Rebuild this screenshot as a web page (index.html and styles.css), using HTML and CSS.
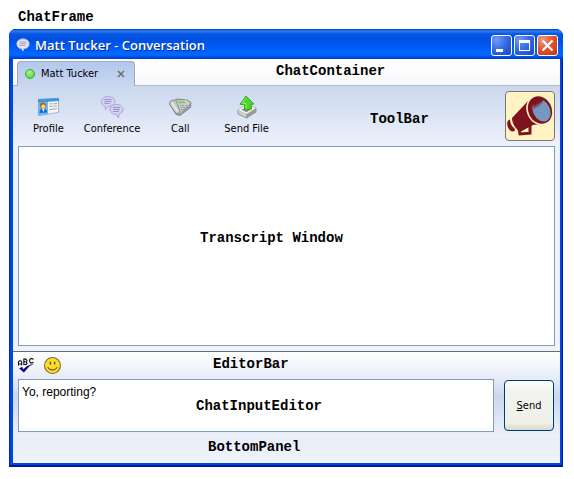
FILE: index.html
```html
<!DOCTYPE html>
<html lang="en">
<head>
<meta charset="utf-8">
<title>Matt Tucker - Conversation</title>
<link rel="stylesheet" href="styles.css">
</head>
<body>
<p class="note caption">ChatFrame</p>
<main class="frame">
  <header class="titlebar">
    <svg class="title-icon" viewBox="0 0 16 16" aria-hidden="true">
      <path d="M8 1C3.500 1 1 3.500 1 6.500S3 12 6 12l2 3 1-3c4 0 6-2.500 6-5.500S12.500 1 8 1z" fill="#e4e4fb" stroke="#c3c0ea"/>
      <path d="M4 4.500h8M4 6.500h8M4 8.500h7" stroke="#9a98c5"/>
    </svg>
    <h1 class="title">Matt Tucker - Conversation</h1>
    <button class="win-btn" type="button" aria-label="Minimize"><svg viewBox="0 0 21 21"><path d="M5 14h7v3H5z" fill="#fff"/></svg></button>
    <button class="win-btn" type="button" aria-label="Maximize"><svg viewBox="0 0 21 21"><path d="M5 5h11v11H5zM6 8v7h9V8z" fill="#fff" fill-rule="evenodd"/></svg></button>
    <button class="win-btn close" type="button" aria-label="Close"><svg viewBox="0 0 21 21"><path d="M5.500 5.500l10 10M15.500 5.500l-10 10" stroke="#fff" stroke-width="2.200"/></svg></button>
  </header>
  <div class="client">
    <nav class="tabs">
      <div class="tab">
        <span class="presence"></span>
        <span>Matt Tucker</span>
        <button class="tab-close" type="button" aria-label="Close tab"><svg viewBox="0 0 8 8"><path d="M1 1l6 6M7 1L1 7" stroke="#69695f" stroke-width="1.400"/></svg></button>
      </div>
      <span class="note note-container">ChatContainer</span>
    </nav>
    <section class="conversation">
      <div class="toolbar">
        <button class="tool" type="button">
          <svg viewBox="0 0 24 24" aria-hidden="true">
            <path d="M2.500 4.500L22.500 3.500v14L2.500 20.500z" fill="#f3f5f7" stroke="#a5b4c3"/>
            <path d="M2 4.500L12 4V19.300L2 21z" fill="#6db8f2"/>
            <path d="M2 4L23 3v3L2 7.500z" fill="#3c98e4"/>
            <path d="M3.500 18c0-3 1-4.500 3.500-4.500s4 1 4 4z" fill="#176dc0"/>
            <path d="M5.800 13.500h2.700L7.500 17z" fill="#fff"/>
            <circle cx="7" cy="10.500" r="3.100" fill="#b56a10"/>
            <circle cx="7.300" cy="11.500" r="2" fill="#ffd18b"/>
            <path d="M13.500 9l3-.2M17.500 8.800l3.500-.3M13.500 11.500l3-.2M17.500 11.200l3.500-.2M13.500 14.500l7.500-.8" stroke="#a0a5ac"/>
          </svg>
          Profile
        </button>
        <button class="tool" type="button">
          <svg viewBox="0 0 24 24" aria-hidden="true">
            <g fill="#d3d0f3" stroke="#aaa6db">
              <path d="M8 1.500c-4 0-6.500 2-6.500 5S3.500 11 5 11.500l.5 3 3-3c4 0 6.500-2 6.500-5s-3-5-7-5z"/>
              <path d="M16.500 9.500c-4 0-6.500 2-6.500 5s2.500 5 6 5l2.500 3.500.5-4c2.500-.7 4-2.300 4-4.500 0-3-2.500-5-6.500-5z"/>
            </g>
            <path d="M4.500 4.500h7M4.500 6.500h7M4.500 8.500h5M13 12.500h7M13 14.500h7M13 16.500h6" stroke="#9995c8"/>
          </svg>
          Conference
        </button>
        <button class="tool" type="button">
          <svg viewBox="0 0 24 24" aria-hidden="true">
            <path d="M2 9L8 19.500l4 1L22.500 12.500 23 7.500 19 5 9 4z" fill="#9f9f9f" stroke="#868686"/>
            <path d="M7 5.500L18 5l4.500 3L12 18 9 17z" fill="#cecece"/>
            <path d="M9.500 6.500L16 6l2.500 2-7 .5z" fill="#6ddb49"/>
            <path d="M1.500 8c0-2 4.500-4 6.500-2.500L12 16c0 2-3 3.500-4.500 2L1.500 9.500z" fill="#c4c4c4" stroke="#8e8e8e"/>
            <path d="M4 7.500l5.500 9" stroke="#e9e9e9" stroke-width="2.200"/>
            <path d="M12 10.500h8M13 12.500h6M13 14.500h4" stroke="#8585a8" stroke-dasharray="1.500 1"/>
          </svg>
          Call
        </button>
        <button class="tool" type="button">
          <svg viewBox="0 0 24 24" aria-hidden="true">
            <path d="M3 15l8-5 10 3v4l-9.500 6L3 19z" fill="#9c9c9c" stroke="#929292"/>
            <path d="M3 15l8-5 10 3-9.500 6z" fill="#f5f5f5"/>
            <path d="M3.500 15.500v3l7.500 4V19z" fill="#d0d0d0"/>
            <path d="M6.500 14.800l5-3 6 2-6 3.500z" fill="#8b8b8b"/>
            <path d="M11 1l8 8-3 .5.500 4.500-7 1V9.500L5 9.300z" fill="#4dd32c" stroke="#35a522"/>
            <path d="M11 2.500L7 8l4 .5v5" fill="none" stroke="#91f26b"/>
          </svg>
          Send File
        </button>
        <span class="note note-toolbar">ToolBar</span>
        <button class="horn" type="button" aria-label="Buzz">
          <svg viewBox="0 0 48 48" aria-hidden="true">
            <path d="M6 26L22 9 26 5l9 27-8 1-13 7C9 36 6 31 6 26z" fill="#7e131d"/>
            <path d="M4 27.500C1 28 .5 32 2 35.500s4.500 5 7 3c0-1-.5-2-1-2.500C5.500 34 4 31 4 27.500z" fill="#7e131d"/>
            <path d="M13 36l1 6 10-.8v-8" fill="none" stroke="#7e131d" stroke-width="3"/>
            <ellipse cx="34" cy="18" rx="12.500" ry="15" transform="rotate(-25 34 18)" fill="#7e131d" stroke="#fff3c4" stroke-width="1.600"/>
            <ellipse cx="35.500" cy="18.500" rx="8.500" ry="11.500" transform="rotate(-25 35.500 18.500)" fill="#7796c1"/>
            <path d="M27 12l1 6 1-6 1 5 1-6 1 5 1-6 1 4 1-5 1 3 1-5-6-1-4 3z" fill="#7e131d"/>
          </svg>
        </button>
      </div>
      <div class="transcript"><span class="note note-transcript">Transcript Window</span></div>
    </section>
    <section class="composer">
      <div class="editor-bar">
        <button class="mini" type="button" aria-label="Check spelling">
          <svg viewBox="0 0 16 16" aria-hidden="true">
            <g fill="none" stroke="#111"><path d="M.5 8V4.500l1-1h1l1 1V8M.5 6.500h3M5.500 2v5h2l1-1-1-1.500h-2 2l1-1-1-1.500zM14.500 2.500l-1-1h-1.500l-1 1v2l1 1h1.500l1-1"/></g>
            <path d="M1 10.500l3-1 1 2 3-2.500 4-2 3-.5-4 2-5.500 6z" fill="#000080"/>
          </svg>
        </button>
        <button class="mini" type="button" aria-label="Insert emoticon">
          <svg viewBox="0 0 16 16" aria-hidden="true">
            <circle cx="8" cy="8" r="7.500" fill="#fbdc29" stroke="#81682e"/>
            <path d="M6 4.500v2.500M10 4.500v2.500" stroke="#66501b" stroke-width="1.400"/>
            <path d="M3.500 9.500c1.500 3.500 7.500 3.500 9 0" fill="none" stroke="#765c1b"/>
          </svg>
        </button>
        <span class="note note-editor">EditorBar</span>
      </div>
      <div class="entry">
        <textarea class="message" aria-label="Message">Yo, reporting?</textarea>
        <span class="note note-input">ChatInputEditor</span>
        <button class="send" type="submit"><span><u>S</u>end</span></button>
      </div>
    </section>
    <footer class="bottom"><span class="note note-bottom">BottomPanel</span></footer>
  </div>
</main>
</body>
</html>
```
FILE: styles.css
```css
* { box-sizing: border-box; }

body {
  margin: 0;
  min-height: 100vh;
  padding: 0 11px 12px 9px;
  display: flex;
  flex-direction: column;
  background: #fff;
  color: #000;
  font: 11px/14px "DejaVu Sans Condensed", "DejaVu Sans", sans-serif;
}

button {
  padding: 0;
  border: 0;
  background: none;
  color: inherit;
  font: inherit;
}

svg { display: block; }

.note {
  font: bold 14px/16px "Liberation Mono", monospace;
  white-space: nowrap;
}

.caption { margin: 0; padding: 9px 9px 4px; }

.frame {
  flex: 1;
  display: flex;
  flex-direction: column;
  padding: 0 3px 4px 4px;
  border-radius: 7px 7px 0 0;
  background: #0046e0;
  box-shadow: inset -1px -2px #001a96, inset 1px 0 #0025b8;
}

.titlebar {
  display: flex;
  align-items: center;
  gap: 2px;
  height: 30px;
  margin: 0 -3px 0 -4px;
  padding: 2px 5px 0 7px;
  border-radius: 7px 7px 0 0;
  background: linear-gradient(#0036b4 0, #2a80f4 2px, #0757e2 5px, #0050e4 11px, #0062ff 22px, #0068ff 26px, #0045d6 29px, #0036bd);
}

.title-icon { width: 14px; height: 16px; }

.title {
  flex: 1;
  margin: 0 0 0 3px;
  color: #fff;
  font: 600 13px/18px "Open Sans", sans-serif;
  text-shadow: 1px 1px #0a2a88;
}

.win-btn {
  width: 21px;
  height: 21px;
  border: 1px solid #fff;
  border-radius: 3px;
  background: radial-gradient(circle at 25% 20%, #6f9bf2, #3568e2 50%, #1746cc);
}

.win-btn svg { width: 21px; height: 21px; margin: -1px; }
.close { background: radial-gradient(circle at 25% 20%, #f09a7e, #e0522c 50%, #c43410); }

.client {
  flex: 1;
  display: flex;
  flex-direction: column;
  background: #edf1f9;
}

.tabs {
  position: relative;
  display: flex;
  height: 27px;
  padding: 2px 4px 0;
  border-bottom: 1px solid #b4b8c0;
  background: linear-gradient(#fff, #f7f8fb);
}

.tab {
  display: flex;
  align-items: center;
  height: 25px;
  padding: 0 9px 0 7px;
  border: 1px solid #a5a9b2;
  border-bottom: 0;
  border-radius: 4px 4px 0 0;
  background: linear-gradient(#b3c8ee, #c9d6f0);
}

.presence {
  width: 10px;
  height: 10px;
  margin-right: 6px;
  border: 1px solid #35a928;
  border-radius: 50%;
  background: radial-gradient(circle at 40% 30%, #a9f58d, #43cf2e);
}

.tab-close { margin-left: 19px; }
.tab-close svg { width: 8px; height: 8px; }

.conversation {
  flex: 1;
  display: flex;
  flex-direction: column;
  padding: 0 5px 5px;
  background: linear-gradient(#cbd7ee, #edf2fb 60px);
}

.toolbar {
  position: relative;
  display: flex;
  align-items: flex-start;
  gap: 20px;
  height: 60px;
  padding: 5px 0 0 15px;
}

.tool {
  display: flex;
  flex-direction: column;
  align-items: center;
  gap: 3px;
  padding-top: 4px;
}

.tool svg { width: 24px; height: 24px; }
.tool:nth-child(3) { margin: 0 12px 0 8px; }

.horn {
  width: 50px;
  height: 50px;
  margin-left: auto;
  border: 1px solid #77777a;
  border-radius: 4px;
  background: #fff3c4;
}

.horn svg { width: 48px; height: 48px; }

.transcript {
  position: relative;
  flex: 1;
  min-height: 80px;
  border: 1px solid #7f9db9;
  background: #fff;
}

.composer {
  padding: 0 5px 5px;
  border-top: 1px solid #686d6c;
  background: linear-gradient(#fff, #e5ebf7 27px, #cbd7ee 45px, #edf2fb);
}

.editor-bar {
  position: relative;
  display: flex;
  align-items: center;
  gap: 9px;
  height: 27px;
}

.mini svg { width: 17px; height: 17px; }

.entry {
  position: relative;
  display: flex;
  align-items: center;
  gap: 10px;
}

.message {
  flex: 1;
  min-width: 0;
  height: 53px;
  margin: 0;
  padding: 4px 3px;
  border: 1px solid #7f9db9;
  background: #fff;
  font: 12px/16px "Liberation Sans", sans-serif;
  resize: none;
}

.send {
  width: 50px;
  height: 51px;
  margin-right: 1px;
  border: 1px solid #003c74;
  border-radius: 4px;
  background: linear-gradient(#fff, #f3f3ee 20%, #f0f0ea 85%, #dcd9cb);
}

.bottom { position: relative; height: 26px; background: linear-gradient(#e9edf7, #eff3fb); }

/* Annotations laid over the window */
.note-container, .note-toolbar, .note-transcript,
.note-editor, .note-input, .note-bottom { position: absolute; pointer-events: none; }
.note-container { left: 263px; top: 4px; }
.note-toolbar { left: 352px; top: 25px; }
.note-transcript { left: 181px; top: 83px; }
.note-editor { left: 195px; top: 4px; }
.note-input { left: 178px; top: 19px; }
.note-bottom { left: 195px; top: 2px; }
```
